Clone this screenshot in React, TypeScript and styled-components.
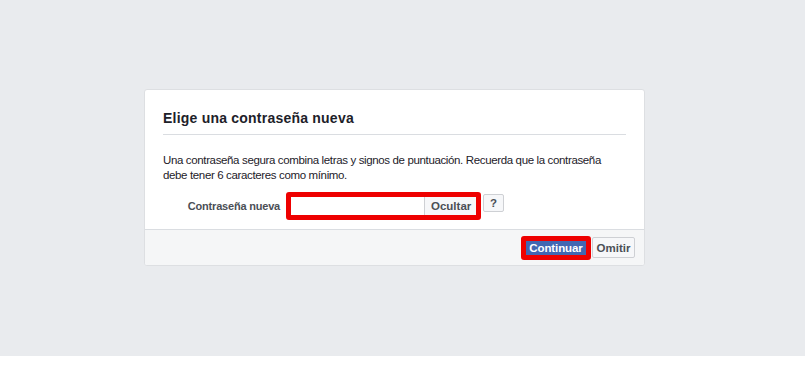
import { FC } from 'react'
import styled, { createGlobalStyle } from 'styled-components'

const GlobalStyle = createGlobalStyle`
    html, body {
        margin: 0;
        padding: 0;
        background: #ffffff;
        font-family: 'Liberation Sans', Arial, sans-serif;
    }
`

const Page = styled.div`
    height: 356px;
    background: #e9ebee;
    padding: 89px 0 0 144px;
    box-sizing: border-box;
`
const Card = styled.div`
    width: 501px;
    background: #ffffff;
    border: 1px solid #dddfe2;
    border-radius: 3px;
    box-sizing: border-box;
    overflow: hidden;
`
const Header = styled.div`
    margin: 0 18px;
    padding: 19px 0 7px;
    border-bottom: 1px solid #dadde1;
`
const Title = styled.h2`
    margin: 0;
    color: #1d2129;
    font-size: 14px;
    font-weight: bold;
    line-height: 18px;
    letter-spacing: 0.22px;
`
const Body = styled.div`
    padding: 18px 18px 9px;
`
const Text = styled.p`
    margin: 0;
    color: #1d2129;
    font-size: 11.5px;
    line-height: 15px;
    letter-spacing: -0.36px;
`
const FieldRow = styled.div`
    display: flex;
    align-items: flex-start;
    margin-top: 9px;
`
const Label = styled.label`
    width: 117px;
    margin-right: 6px;
    padding-top: 6px;
    text-align: right;
    color: #4b4f56;
    font-size: 11px;
    font-weight: bold;
    line-height: 16px;
    letter-spacing: -0.2px;
`
const Highlight = styled.div`
    display: flex;
    border: 5px solid #ee0000;
    border-radius: 3px;
`
const Input = styled.input`
    width: 133px;
    height: 18px;
    margin: 0;
    padding: 0 4px;
    border: none;
    outline: none;
    box-sizing: border-box;
    background: #ffffff;
    font-family: inherit;
    font-size: 12px;
`
const Button = styled.button<{ $primary?: boolean }>`
    margin: 0;
    padding: 0 6px;
    box-sizing: border-box;
    font-family: inherit;
    font-size: 11.5px;
    font-weight: bold;
    line-height: 16px;
    cursor: pointer;
    color: ${p => (p.$primary ? '#ffffff' : '#4b4f56')};
    background: ${p => (p.$primary ? '#4267b2' : '#f6f7f9')};
    border: 1px solid ${p => (p.$primary ? '#4267b2' : '#ced0d4')};
    border-radius: 2px;
`
const ToggleButton = styled(Button)`
    width: 52px;
    height: 18px;
    border-width: 0 0 0 1px;
    border-radius: 0;
    line-height: 18px;
`
const HelpButton = styled(Button)`
    width: 21px;
    height: 18px;
    margin: 2px 0 0 2px;
    padding: 0;
`
const Footer = styled.div`
    display: flex;
    justify-content: flex-end;
    align-items: center;
    gap: 1px;
    height: 35px;
    padding: 0 9px;
    background: #f5f6f7;
    border-top: 1px solid #dadde1;
`
const SubmitButton = styled(Button)`
    width: 60px;
    height: 14px;
    padding: 0;
    border: none;
    border-radius: 0;
    font-size: 11.5px;
    line-height: 14px;
    letter-spacing: -0.1px;
`
const SkipButton = styled(Button)`
    width: 43px;
    height: 21px;
    padding: 0;
`

const App: FC = () => {
    return (
        <>
            <GlobalStyle />
            <Page>
                <Card>
                    <Header>
                        <Title>Elige una contraseña nueva</Title>
                    </Header>
                    <Body>
                        <Text>
                            Una contraseña segura combina letras y signos de puntuación. Recuerda que la contraseña
                            debe tener 6 caracteres como mínimo.
                        </Text>
                        <FieldRow>
                            <Label htmlFor="password_new">Contraseña nueva</Label>
                            <Highlight>
                                <Input id="password_new" type="password" />
                                <ToggleButton>Ocultar</ToggleButton>
                            </Highlight>
                            <HelpButton>?</HelpButton>
                        </FieldRow>
                    </Body>
                    <Footer>
                        <Highlight>
                            <SubmitButton $primary>Continuar</SubmitButton>
                        </Highlight>
                        <SkipButton>Omitir</SkipButton>
                    </Footer>
                </Card>
            </Page>
        </>
    )
}

export default App
